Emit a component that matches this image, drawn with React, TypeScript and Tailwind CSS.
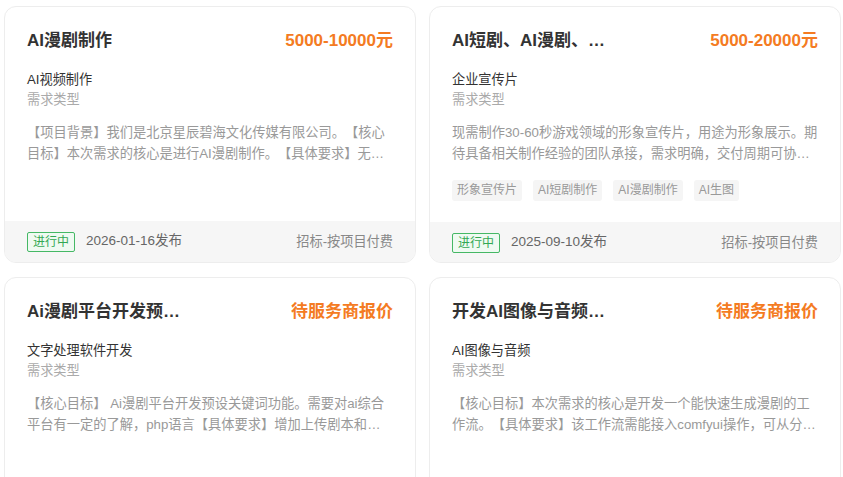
import React from 'react'

type Demand = {
  title: string
  price: string
  category: string
  desc: string
  tags?: string[]
  date: string
}

const demands: Demand[] = [
  {
    title: 'AI漫剧制作',
    price: '5000-10000元',
    category: 'AI视频制作',
    desc: '【项目背景】我们是北京星辰碧海文化传媒有限公司。【核心目标】本次需求的核心是进行AI漫剧制作。【具体要求】无额外的特别要求，按常规流程进行制作即可。',
    date: '2026-01-16发布',
  },
  {
    title: 'AI短剧、AI漫剧、AI生图宣传片制作',
    price: '5000-20000元',
    category: '企业宣传片',
    desc: '现需制作30-60秒游戏领域的形象宣传片，用途为形象展示。期待具备相关制作经验的团队承接，需求明确，交付周期可协商沟通。',
    tags: ['形象宣传片', 'AI短剧制作', 'AI漫剧制作', 'AI生图'],
    date: '2025-09-10发布',
  },
  {
    title: 'Ai漫剧平台开发预设关键词功能',
    price: '待服务商报价',
    category: '文字处理软件开发',
    desc: '【核心目标】 Ai漫剧平台开发预设关键词功能。需要对ai综合平台有一定的了解，php语言【具体要求】增加上传剧本和上传角色图片的功能。',
    date: '2025-08-20发布',
  },
  {
    title: '开发AI图像与音频漫剧工作流',
    price: '待服务商报价',
    category: 'AI图像与音频',
    desc: '【核心目标】本次需求的核心是开发一个能快速生成漫剧的工作流。【具体要求】该工作流需能接入comfyui操作，可从分镜脚本直接生成画面。',
    date: '2025-08-12发布',
  },
]

const DemandCard: React.FC<{ d: Demand }> = ({ d }) => {
  return (
    <div className="flex flex-col rounded-[12px] border border-[#ededed] bg-white overflow-hidden h-[257px]">
      <div className="flex-1 px-[22px] pt-[21px] pb-[21px]">
        {/* Header */}
        <div className="flex justify-between items-center h-[25px]">
          <h3 className="max-w-[160px] truncate text-[17px] leading-[25px] font-bold text-[#333]">{d.title}</h3>
          <span className="text-[17px] leading-[25px] font-bold text-[#f47b22]">{d.price}</span>
        </div>

        {/* Category */}
        <p className="mt-[17px] text-[13.2px] leading-[20px] text-[#333]">{d.category}</p>
        <p className="text-[13.2px] leading-[20px] text-[#aaa]">需求类型</p>

        {/* Description */}
        <p className="mt-[12px] text-[13.25px] leading-[21px] text-[#999] line-clamp-2 [text-spacing-trim:space-all]">{d.desc}</p>

        {/* Tags */}
        {d.tags && (
          <div className="mt-[16px] flex gap-[11px]">
            {d.tags.map((t) => (
              <span key={t} className="h-[21px] px-[5px] rounded-[3px] bg-[#f5f5f5] text-[12px] leading-[21px] text-[#999]">
                {t}
              </span>
            ))}
          </div>
        )}
      </div>

      {/* Footer */}
      <div className="h-[41px] shrink-0 bg-[#f6f6f6] px-[22px] flex items-center justify-between">
        <div className="flex items-center gap-[11px]">
          <span className="h-[20px] px-[5px] rounded-[2px] border border-[#45b865] bg-[#effaf2] text-[12px] leading-[18px] text-[#32a853]">进行中</span>
          <span className="text-[13.5px] text-[#666]">{d.date}</span>
        </div>
        <span className="text-[13.2px] text-[#888]">招标-按项目付费</span>
      </div>
    </div>
  )
}

export default function App() {
  return (
    <div className="w-[843px] h-[477px] overflow-hidden bg-white font-['Liberation_Sans','Noto_Sans_CJK_SC',sans-serif]">
      <div className="grid grid-cols-2 gap-x-[13px] gap-y-[14px] pl-[4px] pr-[2px] pt-[6px]">
        {demands.map((d) => (
          <DemandCard key={d.title} d={d} />
        ))}
      </div>
    </div>
  )
}
